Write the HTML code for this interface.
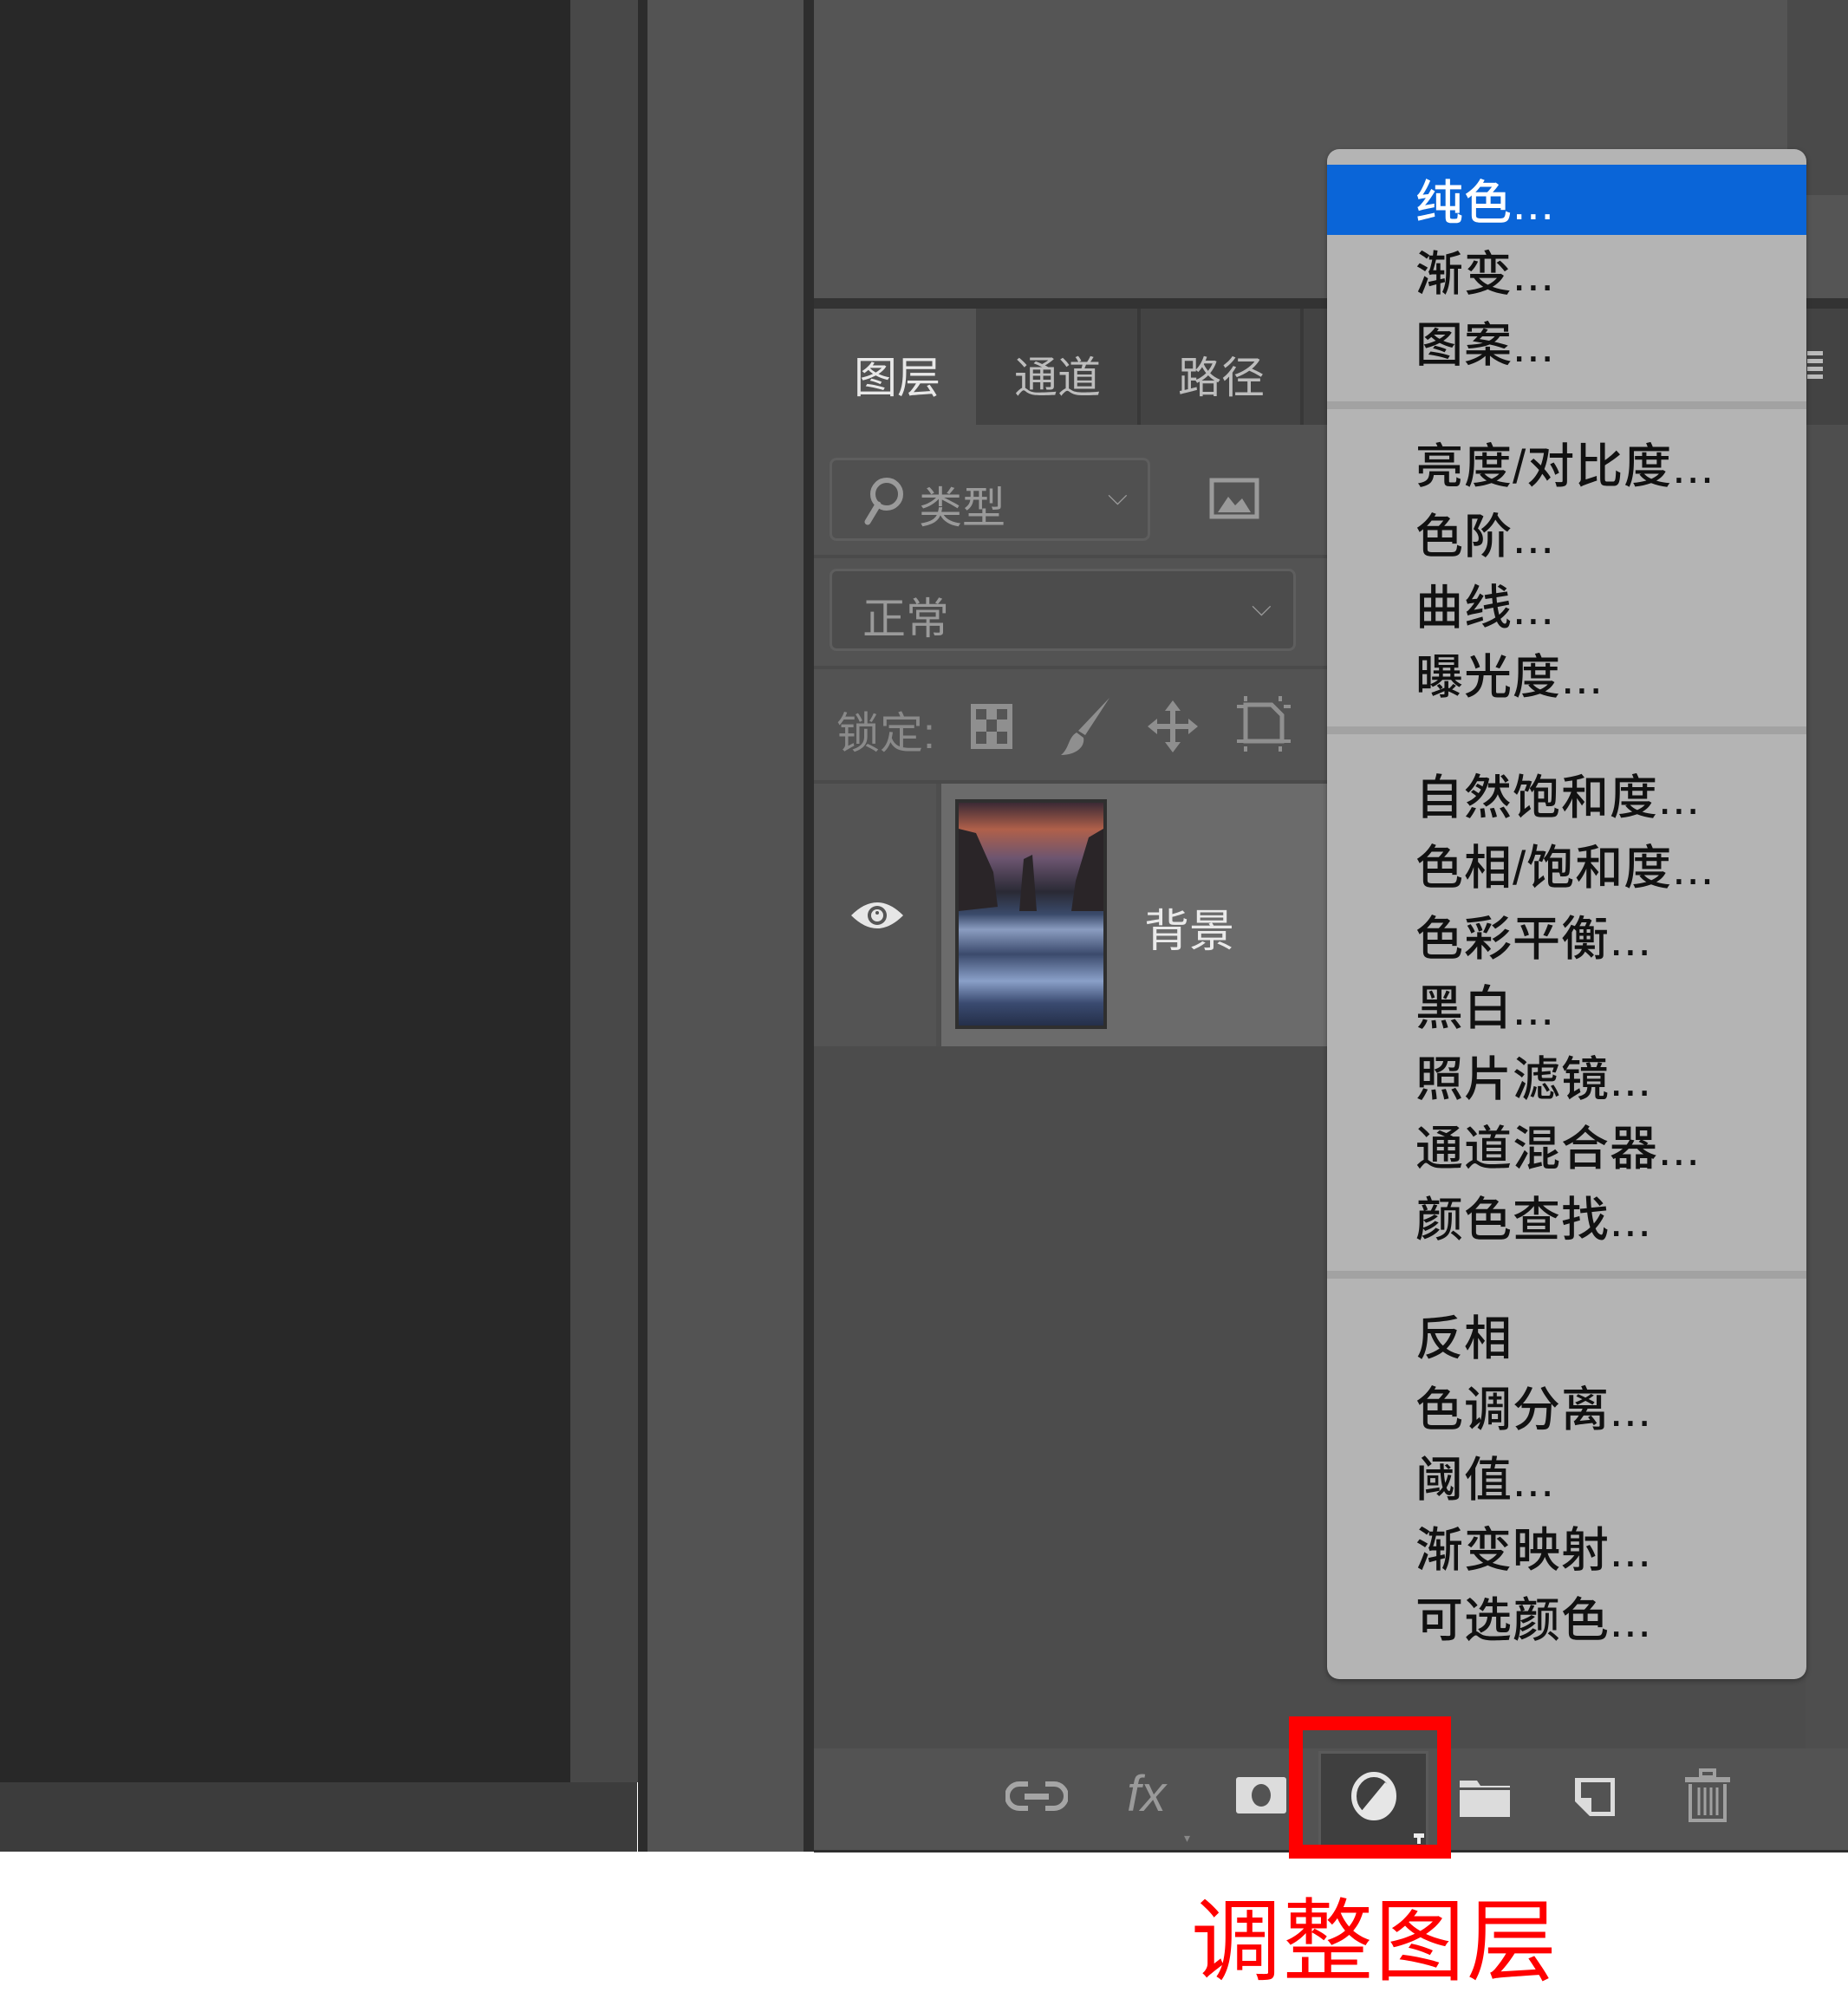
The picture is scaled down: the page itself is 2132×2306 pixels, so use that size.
<!DOCTYPE html>
<html><head><meta charset="utf-8"><style>
*{margin:0;padding:0;box-sizing:border-box}
body{width:2132px;height:2286px;position:relative;overflow:hidden;background:#fff;font-family:"Liberation Sans","Noto Sans CJK SC",sans-serif}
.a{position:absolute}
.mi{position:absolute;left:1633px;font-size:55px;color:#111;line-height:60px;white-space:nowrap;letter-spacing:1px;font-weight:500}
.g{color:#9a9a9a}
</style></head><body>
<div class="a" style="left:0;top:0;width:658px;height:2056px;background:#282828"></div>
<div class="a" style="left:0;top:2056px;width:735px;height:80px;background:#3c3c3c"></div>
<div class="a" style="left:658px;top:0;width:78px;height:2056px;background:#484848"></div>
<div class="a" style="left:736px;top:0;width:11px;height:2136px;background:#2c2c2c"></div>
<div class="a" style="left:747px;top:0;width:180px;height:2136px;background:#535353"></div>
<div class="a" style="left:927px;top:0;width:12px;height:2136px;background:#2e2e2e"></div>
<!-- top panel -->
<div class="a" style="left:939px;top:0;width:1193px;height:344px;background:#555"></div>
<div class="a" style="left:2062px;top:0;width:70px;height:225px;background:#4a4a4a"></div>
<div class="a" style="left:939px;top:344px;width:1193px;height:12px;background:#333"></div>
<!-- tabs -->
<div class="a" style="left:939px;top:356px;width:1193px;height:134px;background:#434343"></div>
<div class="a" style="left:939px;top:356px;width:187px;height:140px;background:#535353"></div>
<div class="a" style="left:1312px;top:356px;width:4px;height:134px;background:#383838"></div>
<div class="a" style="left:1500px;top:356px;width:4px;height:134px;background:#383838"></div>
<div class="a" style="left:985px;top:396px;font-size:50px;color:#e8e8e8">图层</div>
<div class="a" style="left:1170px;top:396px;font-size:50px;color:#bdbdbd">通道</div>
<div class="a" style="left:1359px;top:396px;font-size:50px;color:#bdbdbd">路径</div>
<div class="a" style="left:939px;top:490px;width:1193px;height:1527px;background:#535353"></div>
<!-- search -->
<div class="a" style="left:957px;top:528px;width:370px;height:96px;border:3px solid #5e5e5e;border-radius:8px;background:#505050"></div>
<svg class="a" style="left:995px;top:548px" width="50" height="60" viewBox="0 0 50 60"><circle cx="28" cy="22" r="16" fill="none" stroke="#9a9a9a" stroke-width="6"/><line x1="18" y1="34" x2="6" y2="54" stroke="#9a9a9a" stroke-width="7" stroke-linecap="round"/></svg>
<div class="a g" style="left:1060px;top:546px;font-size:50px">类型</div>
<div class="a g" style="left:1278px;top:556px;font-size:30px">⌵</div>
<svg class="a" style="left:1395px;top:551px" width="58" height="48"><rect x="3" y="3" width="52" height="42" fill="none" stroke="#9a9a9a" stroke-width="5"/><path d="M10 40 L22 22 L30 32 L38 24 L48 40Z" fill="#9a9a9a"/></svg>
<div class="a" style="left:939px;top:640px;width:1193px;height:4px;background:#4a4a4a"></div>
<!-- blend -->
<div class="a" style="left:957px;top:656px;width:538px;height:95px;border:3px solid #5e5e5e;border-radius:8px;background:#4c4c4c"></div>
<div class="a g" style="left:995px;top:674px;font-size:50px">正常</div>
<div class="a g" style="left:1444px;top:684px;font-size:30px">⌵</div>
<div class="a" style="left:939px;top:768px;width:1193px;height:4px;background:#4a4a4a"></div>
<!-- lock -->
<div class="a" style="left:965px;top:806px;font-size:50px;color:#8a8a8a">锁定:</div>
<svg class="a" style="left:1118px;top:810px" width="52" height="56"><rect x="2" y="2" width="48" height="52" fill="#8f8f8f"/><rect x="8" y="8" width="12" height="12" fill="#555"/><rect x="32" y="8" width="12" height="12" fill="#555"/><rect x="20" y="20" width="12" height="14" fill="#555"/><rect x="8" y="34" width="12" height="14" fill="#555"/><rect x="32" y="34" width="12" height="14" fill="#555"/></svg>
<svg class="a" style="left:1222px;top:803px" width="62" height="70"><path d="M58 2 L30 45 L22 40 Z" fill="#8f8f8f"/><path d="M20 42 C10 48 12 60 2 68 C20 68 30 58 28 48Z" fill="#8f8f8f"/></svg>
<svg class="a" style="left:1322px;top:806px" width="62" height="64"><path d="M31 2 L40 14 H34 V29 H49 V23 L60 32 L49 41 V35 H34 V50 H40 L31 62 L22 50 H28 V35 H13 V41 L2 32 L13 23 V29 H28 V14 H22Z" fill="#8f8f8f"/></svg>
<svg class="a" style="left:1425px;top:803px" width="66" height="64"><path d="M12 10 H42 L54 22 V52 H12Z" fill="none" stroke="#8f8f8f" stroke-width="5"/><rect x="2" y="10" width="8" height="4" fill="#8f8f8f"/><rect x="56" y="10" width="8" height="4" fill="#8f8f8f"/><rect x="2" y="50" width="8" height="4" fill="#8f8f8f"/><rect x="56" y="50" width="8" height="4" fill="#8f8f8f"/><rect x="10" y="0" width="4" height="6" fill="#8f8f8f"/><rect x="50" y="0" width="4" height="6" fill="#8f8f8f"/><rect x="10" y="58" width="4" height="6" fill="#8f8f8f"/><rect x="50" y="58" width="4" height="6" fill="#8f8f8f"/></svg>
<!-- layer row -->
<div class="a" style="left:939px;top:900px;width:1193px;height:4px;background:#4a4a4a"></div>
<div class="a" style="left:939px;top:904px;width:147px;height:303px;background:#545454"></div>
<div class="a" style="left:1080px;top:904px;width:6px;height:303px;background:#4e4e4e"></div>
<div class="a" style="left:1086px;top:904px;width:1046px;height:303px;background:#6b6b6b"></div>
<svg class="a" style="left:980px;top:1036px" width="64" height="40"><path d="M2 20 Q32 -10 62 20 Q32 50 2 20Z" fill="#e6e6e6"/><circle cx="32" cy="20" r="11" fill="#555"/><circle cx="32" cy="20" r="7" fill="#e6e6e6"/><circle cx="32" cy="17" r="2" fill="#555"/></svg>
<div class="a" style="left:1102px;top:922px;width:175px;height:265px;background:#2f2f2f;padding:4px">
<svg width="167" height="257" viewBox="0 0 167 257" preserveAspectRatio="none"><defs><linearGradient id="s" x1="0" y1="0" x2="0" y2="1"><stop offset="0" stop-color="#3c2a35"/><stop offset=".12" stop-color="#b0604a"/><stop offset=".25" stop-color="#6c5570"/><stop offset=".4" stop-color="#2a2a35"/><stop offset=".5" stop-color="#3a4a6a"/><stop offset=".57" stop-color="#8a9cc0"/><stop offset=".68" stop-color="#3b4a6c"/><stop offset=".8" stop-color="#8aa0c8"/><stop offset=".9" stop-color="#3a4a70"/><stop offset="1" stop-color="#25304a"/></linearGradient></defs><rect width="167" height="257" fill="url(#s)"/><path d="M0 30 L20 35 L40 80 L45 120 L0 125Z M167 30 L150 40 L135 90 L130 125 L167 125Z M70 125 L75 65 L85 60 L90 125Z" fill="#2a2528"/></svg></div>
<div class="a" style="left:1320px;top:1032px;font-size:52px;color:#eaeaea">背景</div>
<div class="a" style="left:939px;top:1207px;width:1193px;height:810px;background:#4c4c4c"></div>
<!-- bottom bar -->
<div class="a" style="left:939px;top:2017px;width:1193px;height:119px;background:#535353"></div>
<div class="a" style="left:1521px;top:2020px;width:127px;height:116px;background:#3f3f3f;border:3px solid #5a5a5a"></div>
<svg class="a" style="left:1160px;top:2052px" width="72" height="40"><path d="M26 6 H16 A14 14 0 0 0 16 34 H26 M46 6 H56 A14 14 0 0 1 56 34 H46" fill="none" stroke="#a5a5a5" stroke-width="6"/><rect x="22" y="17" width="28" height="7" fill="#a5a5a5"/></svg>
<div class="a" style="left:1300px;top:2036px;font-size:58px;font-style:italic;color:#9a9a9a;font-family:'Liberation Sans',sans-serif">fx</div>
<div class="a" style="left:1366px;top:2112px;font-size:14px;color:#888">▾</div>
<svg class="a" style="left:1426px;top:2050px" width="58" height="42"><rect x="0" y="0" width="58" height="42" rx="3" fill="#dcdcdc"/><ellipse cx="29" cy="21" rx="11" ry="13" fill="#535353"/></svg>
<svg class="a" style="left:1558px;top:2044px" width="54" height="56"><ellipse cx="27" cy="28" rx="23" ry="25" fill="none" stroke="#e6e6e6" stroke-width="6"/><path d="M40 12 L12 46 A23 25 0 0 0 50 28 A23 25 0 0 0 40 12Z" fill="#e6e6e6"/></svg>
<svg class="a" style="left:1630px;top:2114px" width="14" height="14"><path d="M1 1 H13 V6 H9 V13 H5 V6 H1Z" fill="#eee"/></svg>
<svg class="a" style="left:1684px;top:2050px" width="58" height="46"><path d="M0 4 H20 L24 10 H58 V46 H0Z" fill="#dcdcdc"/><rect x="0" y="12" width="58" height="3" fill="#535353"/></svg>
<svg class="a" style="left:1814px;top:2048px" width="52" height="50"><path d="M3 3 H49 V47 H20 L3 30Z" fill="#dcdcdc"/><path d="M10 8 H44 V42 H22 V26 H10Z" fill="#535353"/></svg>
<svg class="a" style="left:1944px;top:2040px" width="52" height="62"><rect x="0" y="10" width="52" height="6" fill="#a0a0a0"/><rect x="18" y="2" width="16" height="8" fill="none" stroke="#a0a0a0" stroke-width="4"/><path d="M6 18 V60 H46 V18" fill="none" stroke="#a0a0a0" stroke-width="4"/><g stroke="#a0a0a0" stroke-width="3"><line x1="16" y1="22" x2="16" y2="54"/><line x1="23" y1="22" x2="23" y2="54"/><line x1="30" y1="22" x2="30" y2="54"/><line x1="37" y1="22" x2="37" y2="54"/></g></svg>
<div class="a" style="left:939px;top:2134px;width:1193px;height:3px;background:#2e2e2e"></div>
<!-- red box -->
<div class="a" style="left:1487px;top:1980px;width:187px;height:164px;border:16px solid #f00"></div>
<div class="a" style="left:1374px;top:2176px;font-size:104px;color:#f00;line-height:130px;letter-spacing:2px">调整图层</div>
<!-- menu -->
<div class="a" style="left:2083px;top:490px;width:49px;height:1527px;background:#4e4e4e"></div>
<div class="a" style="left:2085px;top:405px;width:18px;height:5px;background:#bbb;box-shadow:0 9px 0 #bbb,0 18px 0 #bbb,0 27px 0 #bbb"></div>
<div class="a" style="left:1531px;top:172px;width:553px;height:1765px;background:#b4b4b4;border-radius:14px;box-shadow:0 2px 6px rgba(0,0,0,.35)"></div>
<div class="a" style="left:1531px;top:190px;width:553px;height:81px;background:#0a65d8"></div>
<div class="a" style="left:1531px;top:463px;width:553px;height:9px;background:#a2a2a2"></div>
<div class="a" style="left:1531px;top:838px;width:553px;height:9px;background:#a2a2a2"></div>
<div class="a" style="left:1531px;top:1466px;width:553px;height:9px;background:#a2a2a2"></div>
<div class="mi" style="top:204px;color:#fff">纯色...</div>
<div class="mi" style="top:286px">渐变...</div>
<div class="mi" style="top:368px">图案...</div>
<div class="mi" style="top:508px">亮度/对比度...</div>
<div class="mi" style="top:589px">色阶...</div>
<div class="mi" style="top:671px">曲线...</div>
<div class="mi" style="top:751px">曝光度...</div>
<div class="mi" style="top:890px">自然饱和度...</div>
<div class="mi" style="top:971px">色相/饱和度...</div>
<div class="mi" style="top:1053px">色彩平衡...</div>
<div class="mi" style="top:1133px">黑白...</div>
<div class="mi" style="top:1215px">照片滤镜...</div>
<div class="mi" style="top:1295px">通道混合器...</div>
<div class="mi" style="top:1377px">颜色查找...</div>
<div class="mi" style="top:1514px">反相</div>
<div class="mi" style="top:1596px">色调分离...</div>
<div class="mi" style="top:1677px">阈值...</div>
<div class="mi" style="top:1758px">渐变映射...</div>
<div class="mi" style="top:1839px">可选颜色...</div>
</body></html>
